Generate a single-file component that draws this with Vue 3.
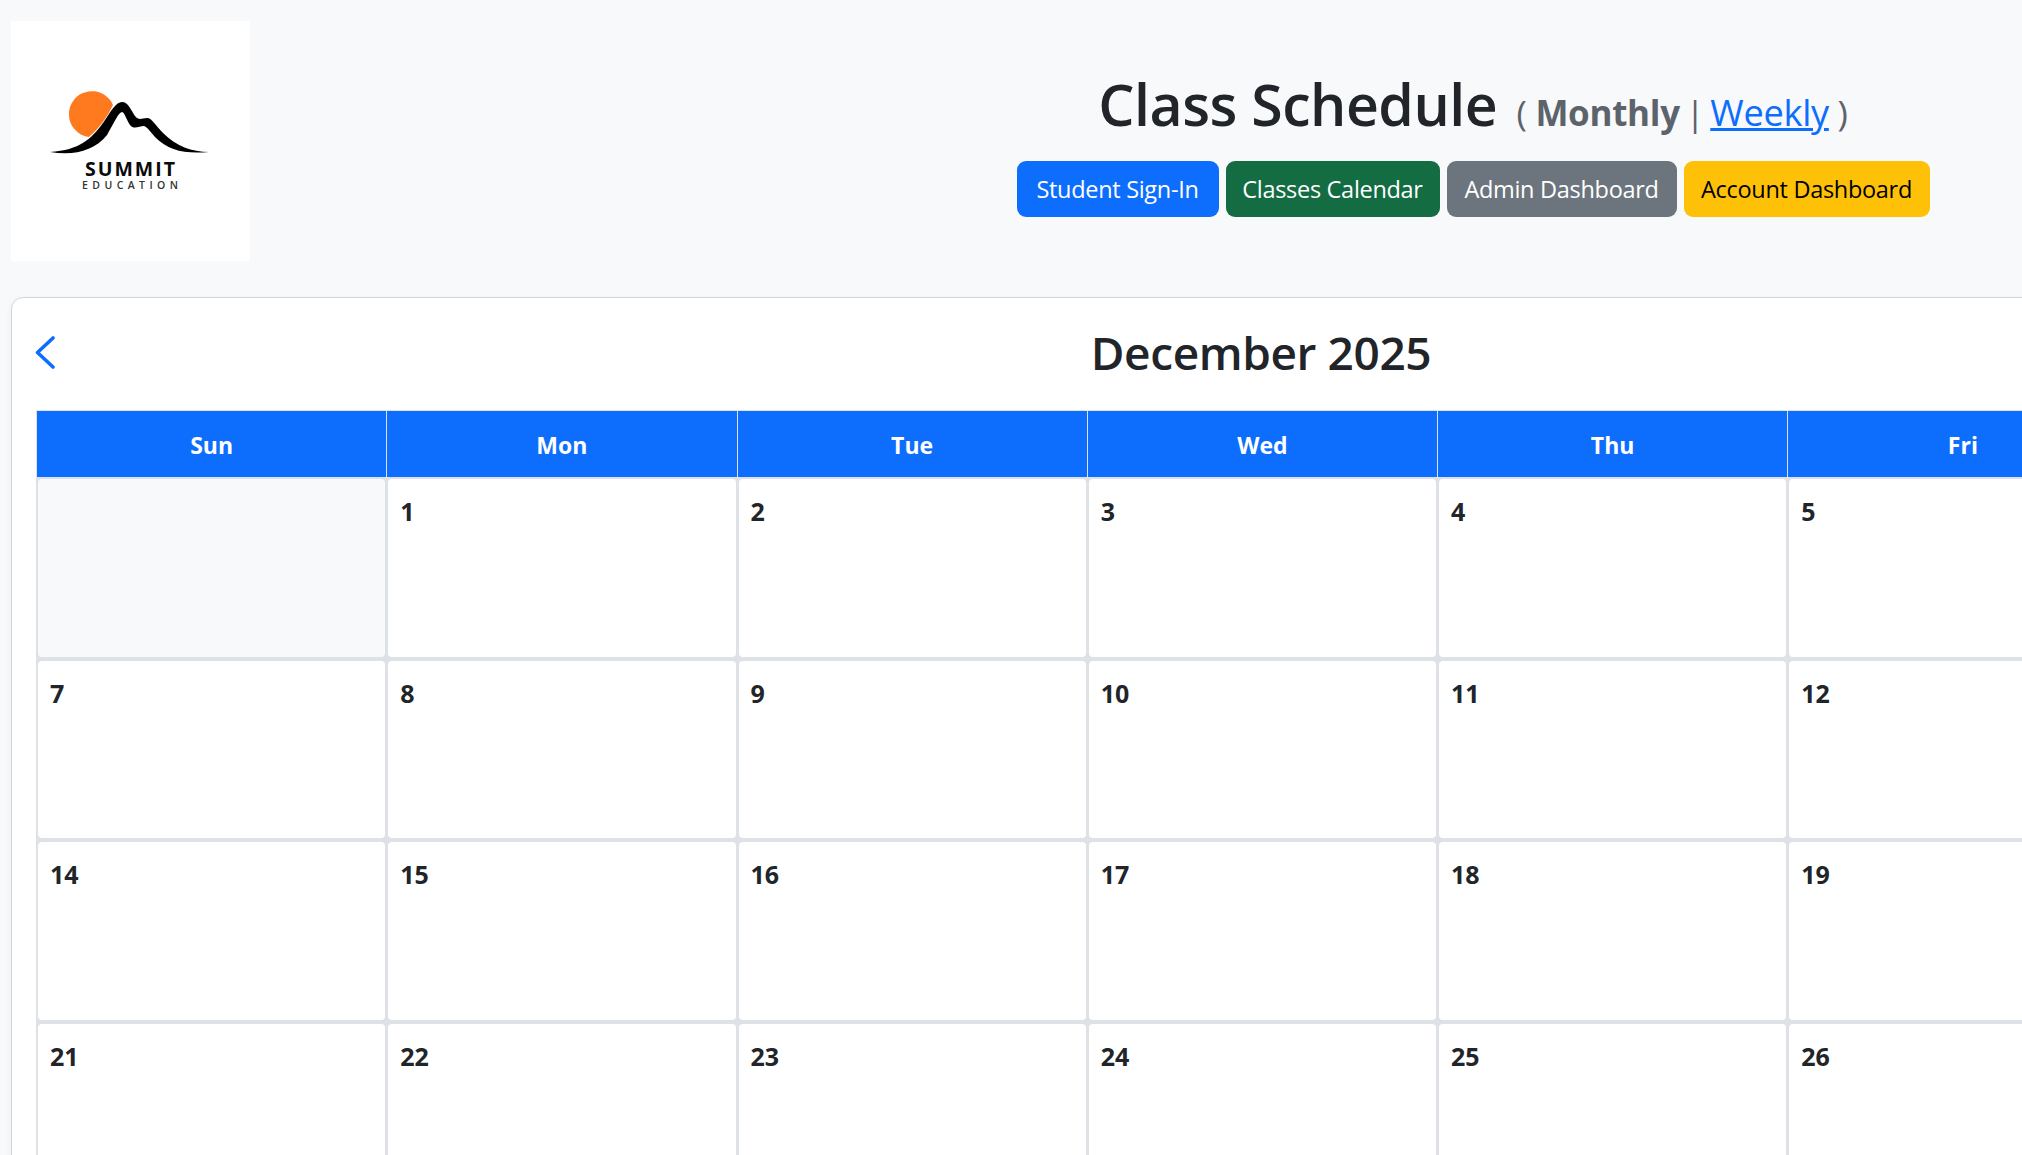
<script setup>
const days = ['Sun', 'Mon', 'Tue', 'Wed', 'Thu', 'Fri', 'Sat']
const cells = [null]
for (let d = 1; d <= 31; d++) cells.push(d)
while (cells.length % 7) cells.push(null)
const buttons = [
  { label: 'Student Sign-In', cls: 'primary' },
  { label: 'Classes Calendar', cls: 'success' },
  { label: 'Admin Dashboard', cls: 'secondary' },
  { label: 'Account Dashboard', cls: 'warning' }
]
</script>

<template>
  <div class="page">
    <header class="top">
      <div class="logo">
        <svg viewBox="11 21 239 240" width="239" height="240">
          <path d="M113 105 A23 23 0 1 0 89 137 Q104 124 113 105 Z" fill="#ff7a1f" />
          <path d="M50 152 C80 150 91 139 103 123 C111 111 116 102 122 102 C128 102 131 110 135 116 C139 121 142 118 147 118 C152 118 156 126 163 133 C176 146 192 152 209 152 C185 154 169 151 155 137 C149 130 147 127 144 126 C139 126 134 130 130 125 C126 119 125 113 122 112 C118 113 114 123 107 135 C94 151 74 156 50 152 Z" fill="#000" />
          <text x="85" y="176" class="logo-a" textLength="90" lengthAdjust="spacing">SUMMIT</text>
          <text x="82" y="189" class="logo-b" textLength="96" lengthAdjust="spacing">EDUCATION</text>
        </svg>
      </div>
      <div class="head">
        <h1 class="title">Class Schedule <small class="sub">( <b>Monthly</b> <span class="bar">|</span> <a href="#" class="link">Weekly</a> )</small></h1>
        <nav class="btns">
          <a v-for="b in buttons" :key="b.label" href="#" class="btn" :class="b.cls">{{ b.label }}</a>
        </nav>
      </div>
    </header>

    <section class="card">
      <div class="cal-head">
        <a href="#" class="nav">
          <svg viewBox="0 0 20 35" width="20" height="35" fill="none" stroke="#0d6efd" stroke-width="3.6" stroke-linecap="round" stroke-linejoin="round"><path d="M18 3 L2.5 17.5 L18 32" /></svg>
        </a>
        <h2 class="month">December 2025</h2>
        <a href="#" class="nav">
          <svg viewBox="0 0 20 35" width="20" height="35" fill="none" stroke="#0d6efd" stroke-width="3.6" stroke-linecap="round" stroke-linejoin="round"><path d="M2 3 L17.5 17.5 L2 32" /></svg>
        </a>
      </div>
      <div class="table">
        <div class="dow">
          <div v-for="d in days" :key="d" class="dow-cell">{{ d }}</div>
        </div>
        <div class="grid">
          <div v-for="(c, i) in cells" :key="i" class="cell" :class="{ empty: c === null }">{{ c }}</div>
        </div>
      </div>
    </section>
  </div>
</template>

<style>
html, body { margin: 0; overflow: hidden; background: #f8f9fa; }
</style>

<style scoped>
.page {
  width: 2022px;
  height: 1155px;
  overflow: hidden;
  background: #f8f9fa;
  font-family: "Open Sans", "Noto Sans", sans-serif;
  color: #212529;
  box-sizing: border-box;
  padding: 21px 0 0 11px;
}
.top { display: flex; align-items: flex-start; }
.logo { width: 239px; height: 240px; background: #fff; flex: none; }
.logo svg { display: block; }
.logo-a { font: 700 19.5px "Open Sans", sans-serif; fill: #0a0a0a; }
.logo-b { font: 600 10.5px "Open Sans", sans-serif; fill: #333; }
.head {
  width: 1098px;
  margin-left: 674px;
  display: flex;
  flex-direction: column;
  align-items: center;
  flex: none;
  padding-top: 44px;
}
.title { margin: 0; font-size: 57.2px; font-weight: 600; line-height: 78px; letter-spacing: -0.5px; white-space: nowrap; }
.sub { margin-left: 5px; font-size: 35px; font-weight: 400; color: #5c636a; letter-spacing: -0.3px; }
.sub b { font-weight: 700; }
.bar { margin: 0 -3px; }
.link { color: #0d6efd; text-decoration: underline; font-size: 36.2px; }
.btns { display: flex; gap: 7px; margin-top: 9px; }
.btn {
  height: 56px;
  box-sizing: border-box;
  display: flex;
  align-items: center;
  justify-content: center;
  border-radius: 9px;
  font-size: 23.5px;
  letter-spacing: -0.3px;
  text-decoration: none;
  white-space: nowrap;
}
.primary { width: 202px; background: #0d6efd; color: #fff; }
.success { width: 214px; background: #146c43; color: #fff; }
.secondary { width: 230px; background: #6c757d; color: #fff; }
.warning { width: 246px; background: #ffc107; color: #000; }
.card {
  width: 2500px;
  box-sizing: border-box;
  margin-top: 36px;
  padding: 24px;
  background: #fff;
  border: 1px solid #d4d5d6;
  border-radius: 12px;
  box-shadow: 0 3px 6px rgba(0, 0, 0, 0.06);
}
.cal-head { display: flex; align-items: center; justify-content: space-between; height: 64px; margin-bottom: 24px; }
.nav { display: block; margin-left: -1px; margin-bottom: 3px; height: 35px; }
.month { margin: -4px 0 0; font-size: 46px; font-weight: 600; letter-spacing: -0.4px; line-height: 64px; }
.table { width: 2456px; }
.dow { display: flex; border-top: 1px solid #dee2e6; border-left: 1px solid #dee2e6; background: #0d6efd; height: 67px; box-sizing: border-box; }
.dow-cell {
  width: 350.25px;
  box-sizing: border-box;
  border-right: 1px solid #dee2e6;
  padding-top: 2px;
  color: #fff;
  font-weight: 700;
  font-size: 23px;
  display: flex;
  align-items: center;
  justify-content: center;
}
.grid {
  display: grid;
  grid-template-columns: repeat(7, 347.25px);
  grid-auto-rows: 177.5px;
  column-gap: 3px;
  row-gap: 4px;
  padding: 2px 2px;
  background: #dee2e6;
}
.cell {
  background: #fff;
  border-radius: 4px;
  padding: 14px 12px;
  font-size: 25px;
  font-weight: 700;
  line-height: 36px;
}
.cell.empty { background: #f8f9fa; }
</style>
